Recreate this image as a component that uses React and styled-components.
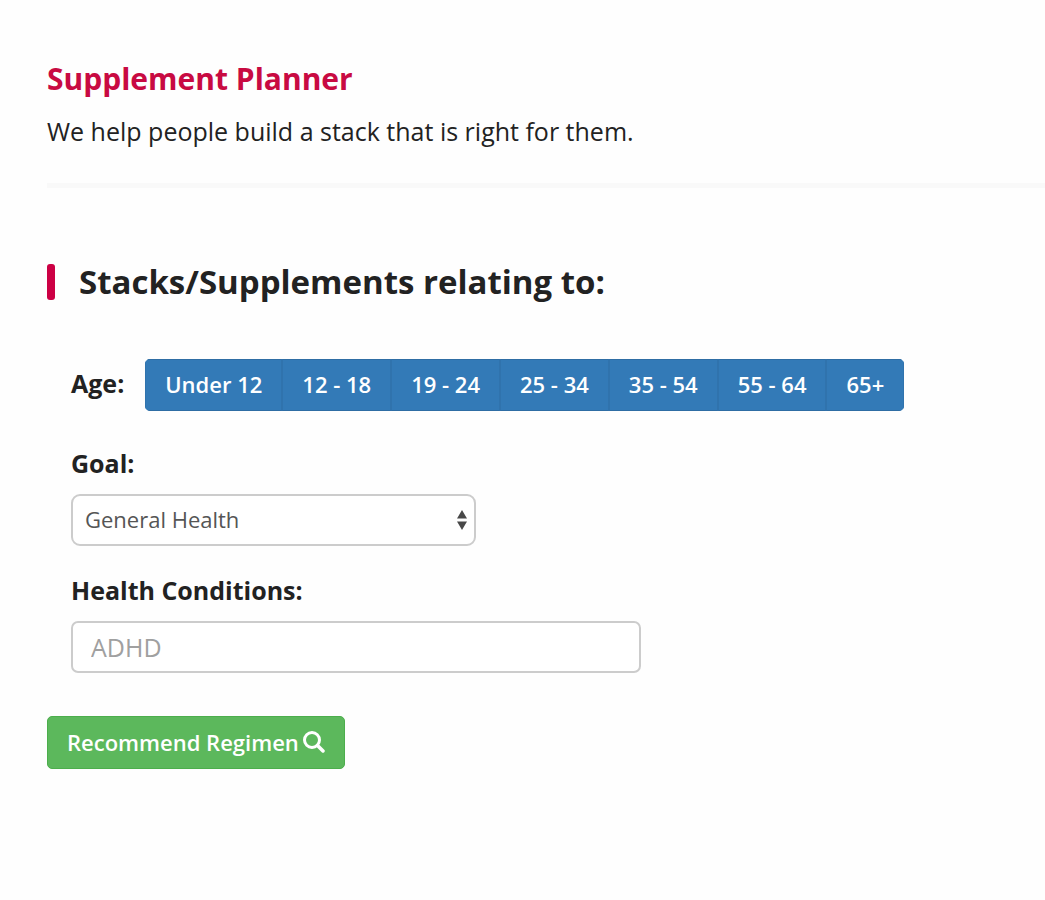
import React from "react";
import styled, { createGlobalStyle } from "styled-components";

const GlobalStyle = createGlobalStyle`
  * {
    box-sizing: border-box;
  }

  body {
    margin: 0;
    background-color: #fefefe;
    color: #222;
    font-family: "Open Sans", sans-serif;
  }
`;

const Page = styled.main`
  padding: 59px 0 60px 47px;
`;

const Title = styled.h1`
  margin: 0;
  color: #c80a42;
  font-size: 30px;
  line-height: 40px;
`;

const Tagline = styled.p`
  margin: 12px 0 0;
  font-size: 25px;
  line-height: 40px;
`;

const Divider = styled.hr`
  margin: 32px 0 76px;
  border: 0;
  height: 5px;
  background-color: #f9f9f9;
`;

const SectionTitle = styled.h2`
  display: flex;
  align-items: center;
  gap: 24px;
  margin: 0;
  font-size: 33px;
  line-height: 36px;

  &::before {
    content: "";
    width: 8px;
    height: 36px;
    border-radius: 3px;
    background-color: #cc0044;
  }
`;

const Fields = styled.div`
  padding: 59px 24px 15px;
`;

const AgeRow = styled.div`
  display: flex;
  align-items: center;
  gap: 21px;
  margin-bottom: 36px;
`;

const Label = styled.label`
  display: block;
  font-size: 25px;
  font-weight: 700;
  line-height: 32px;
`;

const AgeLabel = styled(Label)`
  padding-bottom: 4px;
`;

const ButtonGroup = styled.div`
  display: flex;
  border-radius: 5px;
  overflow: hidden;
`;

const AgeButton = styled.button`
  height: 52px;
  padding: 0 19px 2px;
  border: 1px solid #2e6da4;
  border-left-color: #3073ad;
  border-right-color: #3073ad;
  background-color: #337ab7;
  color: white;
  font-family: inherit;
  font-size: 22px;
  font-weight: 600;
  white-space: nowrap;
`;

const Field = styled.div`
  margin-bottom: 28px;
`;

const SelectBox = styled.div`
  position: relative;
  max-width: 405px;
  margin-top: 15px;
`;

const Select = styled.select`
  display: block;
  appearance: none;
  width: 100%;
  height: 52px;
  padding: 0 12px 2px;
  border: 2px solid #ccc;
  border-radius: 9px;
  background-color: white;
  color: #555;
  font-family: inherit;
  font-size: 22px;
`;

const Arrows = styled.svg`
  position: absolute;
  top: 16px;
  right: 9px;
  pointer-events: none;
`;

const Input = styled.input`
  display: block;
  width: 100%;
  max-width: 570px;
  height: 52px;
  margin-top: 15px;
  padding: 0 18px;
  border: 2px solid #ccc;
  border-radius: 7px;
  background-color: white;
  color: #555;
  font-family: inherit;
  font-size: 25px;

  &::placeholder {
    color: #a0a0a0;
    opacity: 1;
  }
`;

const SubmitButton = styled.button`
  display: flex;
  align-items: center;
  gap: 4px;
  height: 53px;
  padding: 0 19px 2px;
  border: 1px solid #4cae4c;
  border-radius: 5px;
  background-color: #5cb85c;
  color: white;
  font-family: inherit;
  font-size: 22px;
  font-weight: 600;
`;

const ages = ["Under 12", "12 - 18", "19 - 24", "25 - 34", "35 - 54", "55 - 64", "65+"];

const App = () => {
  return (
    <Page>
      <GlobalStyle />
      <Title>Supplement Planner</Title>
      <Tagline>We help people build a stack that is right for them.</Tagline>
      <Divider />
      <SectionTitle>Stacks/Supplements relating to:</SectionTitle>
      <form onSubmit={(e) => e.preventDefault()}>
        <Fields>
          <AgeRow>
            <AgeLabel as="span" id="age-label">Age:</AgeLabel>
            <ButtonGroup role="group" aria-labelledby="age-label">
              {ages.map((age) => (
                <AgeButton type="button" key={age}>{age}</AgeButton>
              ))}
            </ButtonGroup>
          </AgeRow>
          <Field>
            <Label htmlFor="goal">Goal:</Label>
            <SelectBox>
              <Select id="goal">
                <option>General Health</option>
              </Select>
              <Arrows width="10" height="20" viewBox="0 0 10 20" aria-hidden="true">
                <path d="M5 0l5 8.5H0zM5 20l5-8.5H0z" fill="#484848" />
              </Arrows>
            </SelectBox>
          </Field>
          <Field>
            <Label htmlFor="conditions">Health Conditions:</Label>
            <Input id="conditions" type="text" placeholder="ADHD" />
          </Field>
        </Fields>
        <SubmitButton type="submit">
          Recommend Regimen
          <svg width="22" height="22" viewBox="0 0 22 22" fill="none" stroke="white" aria-hidden="true">
            <circle cx="9" cy="9" r="7.5" strokeWidth="3" />
            <path d="M14.5 14.5l5.5 5.5" strokeWidth="3.5" strokeLinecap="round" />
          </svg>
        </SubmitButton>
      </form>
    </Page>
  );
};

export default App;
